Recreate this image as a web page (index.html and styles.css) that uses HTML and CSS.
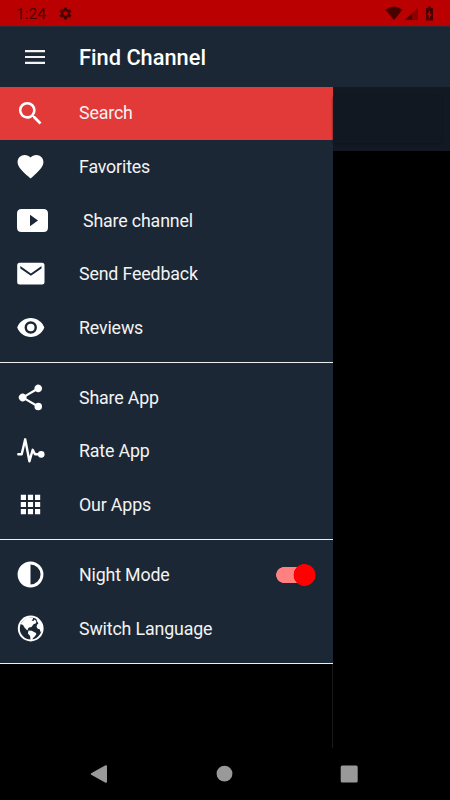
FILE: index.html
```html
<!DOCTYPE html>
<html lang="en">
<head>
<meta charset="utf-8">
<title>Find Channel</title>
<link rel="stylesheet" href="styles.css">
</head>
<body>
<header class="status">
  <span class="clock">1:24</span>
  <svg class="gear" viewBox="0 0 24 24"><path d="M19.14 12.94c.04-.3.06-.61.06-.94s-.02-.64-.07-.94l2.03-1.58a.5.5 0 0 0 .12-.61l-1.92-3.32a.5.5 0 0 0-.59-.22l-2.39.96a7 7 0 0 0-1.62-.94l-.36-2.54a.5.5 0 0 0-.48-.41h-3.84a.5.5 0 0 0-.47.41l-.36 2.54a7 7 0 0 0-1.62.94l-2.39-.96a.5.5 0 0 0-.59.22L2.74 8.87a.5.5 0 0 0 .12.61l2.03 1.58a7 7 0 0 0 0 1.88l-2.03 1.58a.5.5 0 0 0-.12.61l1.92 3.32c.12.22.37.29.59.22l2.39-.96c.5.38 1.03.7 1.62.94l.36 2.54c.05.24.24.41.48.41h3.84c.24 0 .44-.17.47-.41l.36-2.54a7 7 0 0 0 1.62-.94l2.39.96c.22.08.47 0 .59-.22l1.92-3.32a.5.5 0 0 0-.12-.61zM12 15.600a3.600 3.600 0 1 1 0-7.200 3.600 3.600 0 0 1 0 7.200z"/></svg>
  <svg class="signals" viewBox="0 0 52 18">
    <path d="M.5 4.800Q9-1.600 17.500 4.800L9 15z"/>
    <path class="faint" d="M33 2.500V15H20z"/><path d="M27 8.500V15H20z"/>
    <path fill-rule="evenodd" d="M41 3h2V1.500h3V3h2v12.500h-7V3zM45 5l-3 5h1.700v4.300l3-5.300h-1.700z"/>
  </svg>
</header>
<div class="appbar">
  <svg class="menu" viewBox="0 0 20 14"><path d="M0 0h20v2.200H0zM0 5.900h20v2.200H0zM0 11.800h20V14H0z"/></svg>
  <h1>Find Channel</h1>
</div>
<main class="stage">
  <nav class="drawer">
    <div class="group">
      <a class="row active"><svg class="icon" viewBox="0 0 24 24"><path d="M15.500 14h-.79l-.28-.27A6.470 6.470 0 0 0 16 9.500 6.500 6.500 0 1 0 9.500 16c1.610 0 3.090-.59 4.230-1.570l.27.28v.79l5 4.990L20.490 19l-4.990-5zm-6 0a4.500 4.500 0 1 1 0-9 4.500 4.500 0 0 1 0 9z"/></svg><span>Search</span></a>
      <a class="row"><svg class="icon" viewBox="0 0 24 24"><path d="M12 21.350l-1.450-1.320C5.400 15.360 2 12.280 2 8.500 2 5.420 4.420 3 7.500 3c1.740 0 3.410.81 4.500 2.090C13.090 3.810 14.760 3 16.500 3 19.580 3 22 5.420 22 8.500c0 3.780-3.400 6.860-8.550 11.540z"/></svg><span>Favorites</span></a>
      <a class="row wide"><svg class="icon" viewBox="0 0 31 31"><path fill-rule="evenodd" d="M4.500 4h22q4.500 0 4.500 4.500v14q0 4.500-4.500 4.500h-22Q0 27 0 22.500v-14Q0 4 4.500 4zM13 9.800v11.400l8-5.700z"/></svg><span>Share channel</span></a>
      <a class="row"><svg class="icon" viewBox="0 0 31 31"><path fill-rule="evenodd" d="M4.700 4.700h22.300q2.500 0 2.500 2.500v16.800q0 2.500-2.500 2.500H4.700Q2.200 26.500 2.200 24V7.200Q2.200 4.700 4.700 4.700zm.6 3.400v2.400l10.600 7.200 10.600-7.200V8.100l-10.600 7.300z"/></svg><span>Send Feedback</span></a>
      <a class="row"><svg class="icon" viewBox="0 0 24 24"><path fill-rule="evenodd" d="M12.200 4.700c-4.800 0-8.900 3-10.500 7.300 1.600 4.300 5.700 7.300 10.500 7.300s8.900-3 10.500-7.300c-1.600-4.300-5.700-7.300-10.500-7.300zm0 12.100a4.800 4.800 0 1 1 0-9.600 4.800 4.800 0 0 1 0 9.600zm0-7.700a2.900 2.900 0 1 0 0 5.800 2.900 2.900 0 0 0 0-5.800z"/></svg><span>Reviews</span></a>
    </div>
    <div class="group">
      <a class="row"><svg class="icon" viewBox="0 0 24 24"><path d="M18 16.080c-.76 0-1.440.3-1.960.77L8.910 12.700a3.300 3.300 0 0 0 0-1.400l7.050-4.110A2.990 2.990 0 1 0 15 5c0 .24.04.47.09.7L8.040 9.810a3 3 0 1 0 0 4.380l7.120 4.160c-.05.21-.08.43-.08.65A2.920 2.920 0 1 0 18 16.080z"/></svg><span>Share App</span></a>
      <a class="row"><svg class="icon line" viewBox="0 0 31 31"><path d="M3.300 19.300h3.400L10.200 4.300l4.200 22 3.300-11.500 2.300 4.500H26"/><circle cx="26.200" cy="19.300" r="2.200"/></svg><span>Rate App</span></a>
      <a class="row"><svg class="icon" viewBox="0 0 24 24"><path d="M4.500 4.500h4v4h-4zm5.500 0h4v4h-4zm5.500 0h4v4h-4zM4.500 10h4v4h-4zm5.500 0h4v4h-4zm5.500 0h4v4h-4zM4.500 15.500h4v4h-4zm5.500 0h4v4h-4zm5.500 0h4v4h-4z"/></svg><span>Our Apps</span></a>
    </div>
    <div class="group">
      <a class="row"><svg class="icon" viewBox="0 0 24 24"><path fill-rule="evenodd" d="M12 2a10 10 0 1 0 0 20 10 10 0 0 0 0-20zm0 2.200a7.800 7.800 0 0 1 0 15.600z"/></svg><span>Night Mode</span><i class="switch"></i></a>
      <a class="row"><svg class="icon" viewBox="0 0 31 31"><circle class="ring" cx="15.700" cy="15.500" r="11.900"/><path d="M5.500 11L9 6.500l3.500-2.300 5 .3.600 1.500-1.600 1.500 2 .5 1-1.500 1.800 1.500-.3 2.300-2.500 1-2 2.700-2.500.5-1.300 1.500.3 1.200-1.500-.4-2-2.300-1.500-2.500zM13.500 17.500l3.200.3 4.300 2.200.3 1.200-1.800 2.500-1.500 1.300-.8 2h-1.700l-.4-4-2.200-2.500zM21 4.500l4 3.500 2.200 5-.2 5-1.500 1-.8-2.800-2-.5-1.200-2 .7-2.300 1.200-1-1.400-2.500z"/></svg><span>Switch Language</span></a>
    </div>
  </nav>
  <div class="page"><div class="toolbar"><div class="field"></div></div></div>
</main>
<footer class="navbar">
  <svg viewBox="0 0 18 18"><path d="M1.200 8.200L15.500.2Q17 0 17 1v16q0 1-1.500.8L1.200 9.800Q0 9 1.200 8.200z"/></svg>
  <svg viewBox="0 0 18 18"><circle cx="9.500" cy="8.700" r="7.900"/></svg>
  <svg viewBox="0 0 18 18"><rect x=".7" y=".5" width="17" height="17" rx="1.500"/></svg>
</footer>
</body>
</html>
```
FILE: styles.css
```css
* { box-sizing: border-box; }
body {
  margin: 0;
  width: 450px;
  height: 800px;
  display: flex;
  flex-direction: column;
  overflow: hidden;
  background: #000;
  color: #f3f3f3;
  font-family: Roboto, sans-serif;
}
svg { display: block; fill: currentColor; flex: none; }
.status {
  height: 26px;
  display: flex;
  align-items: center;
  padding: 1px 13px 0 16px;
  background: #ba0000;
  color: #4b0000;
}
.clock { width: 42px; font-size: 15.500px; }
.gear { width: 15px; height: 15px; }
.signals { width: 52px; height: 18px; margin-left: auto; }
.faint { opacity: .4; }
.appbar {
  height: 61px;
  display: flex;
  align-items: center;
  padding-left: 25px;
  background: #1c2736;
  border-top: 1px solid #2b2b38;
}
.menu { width: 20px; height: 14px; margin-right: 34px; }
h1 { margin: 0; padding-top: 1px; color: #fff; font-size: 21.800px; font-weight: 500; line-height: 26px; }
.stage { height: 661px; display: flex; }
.drawer { width: 333px; border-right: 1px solid #1a1a1a; }
.group {
  width: 333px;
  padding: 8px 0;
  background: #1c2736;
  border-bottom: 1px solid #eceef0;
}
.group:first-child { padding-top: 0; }
.row {
  height: 53.600px;
  display: flex;
  align-items: center;
  padding: 0 17px 0 15px;
  font-size: 17.800px;
  letter-spacing: -.15px;
}
.active { height: 53px; background: #e23939; }
.active span { margin-top: -2px; }
.icon { width: 31px; height: 31px; margin-right: 33px; color: #fff; }
.wide .icon { margin: 0 35px 0 2px; }
.line { fill: none; stroke: currentColor; stroke-width: 2.400; stroke-linejoin: round; stroke-linecap: round; }
.line circle { fill: currentColor; }
.ring { fill: none; stroke: currentColor; stroke-width: 2; }
.group + .group { padding: 7px 0 8px; }
.group + .group + .group { padding: 8px 0; }
.switch {
  width: 40px;
  height: 22px;
  margin-left: auto;
  border-radius: 11px;
  background:
    radial-gradient(circle at 28.500px 11px, #f00 10.600px, transparent 11.200px),
    radial-gradient(circle at 8px 11px, #ff8080 7.600px, transparent 8.200px),
    linear-gradient(#ff8080, #ff8080) 8px 3px / 22px 16px no-repeat;
}
.page { flex: 1; }
.toolbar { height: 64px; padding: 8px 8px 8px 0; background: #121923; }
.field { height: 48px; border-radius: 3px; background: #121821; box-shadow: 0 1px 2px #0e141c; }
.navbar {
  height: 52px;
  display: flex;
  justify-content: space-between;
  align-items: center;
  padding: 0 92px 0 90px;
  color: #999;
}
.navbar svg { width: 18px; height: 18px; }
```
